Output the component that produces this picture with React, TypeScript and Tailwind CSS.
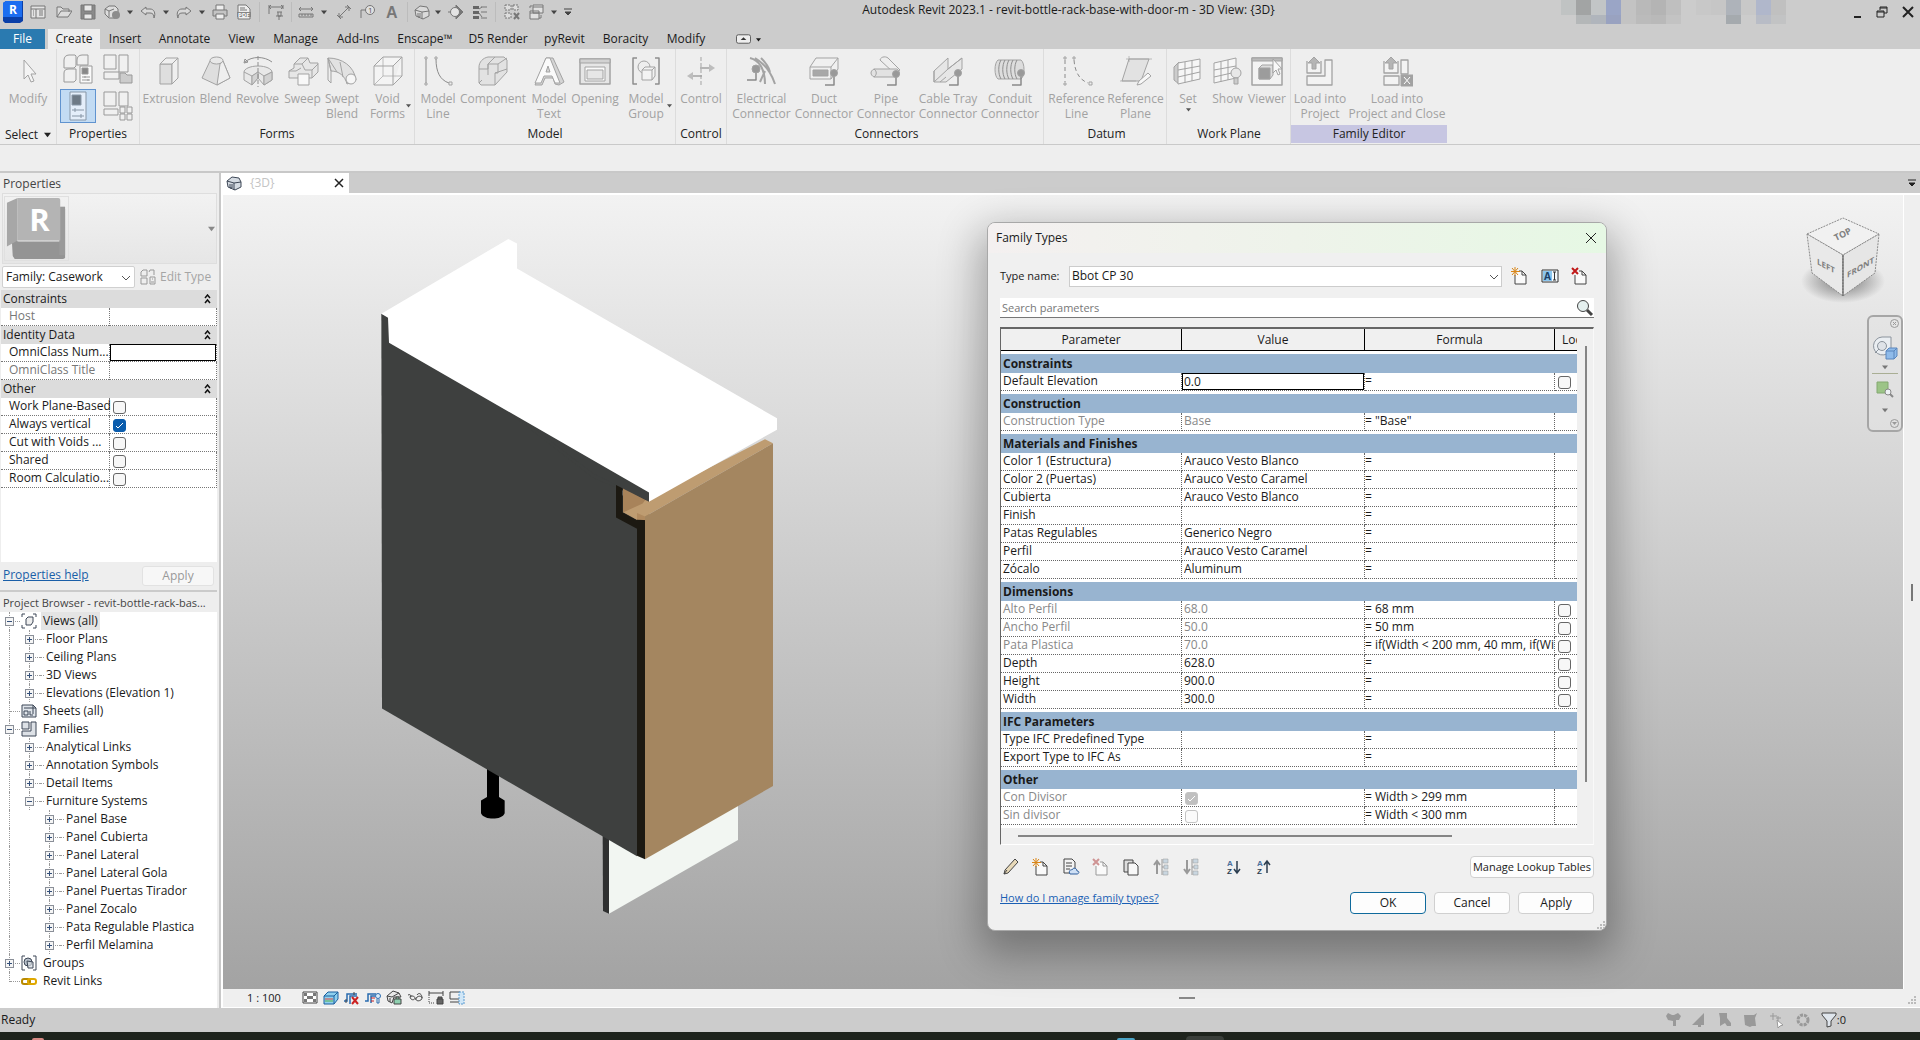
import React, { useState } from 'react';

type IconProps = { size?: number; className?: string };

type Param = {
  name: string;
  value?: string;
  formula: string;
  lock?: boolean;
  muted?: boolean;
  active?: boolean;
  check?: 'on' | 'off';
};

type TreeRow = {
  label: string;
  level: 0 | 1 | 2;
  toggle?: '+' | '-';
  icon?: string;
  selected?: boolean;
};

const paramGroups: { title: string; rows: Param[] }[] = [
  {
    title: 'Constraints',
    rows: [{ name: 'Default Elevation', value: '0.0', formula: '=', lock: true, active: true }],
  },
  {
    title: 'Construction',
    rows: [{ name: 'Construction Type', value: 'Base', formula: '= "Base"', muted: true }],
  },
  {
    title: 'Materials and Finishes',
    rows: [
      { name: 'Color 1 (Estructura)', value: 'Arauco Vesto Blanco', formula: '=' },
      { name: 'Color 2 (Puertas)', value: 'Arauco Vesto Caramel', formula: '=' },
      { name: 'Cubierta', value: 'Arauco Vesto Blanco', formula: '=' },
      { name: 'Finish', value: '', formula: '=' },
      { name: 'Patas Regulables', value: 'Generico Negro', formula: '=' },
      { name: 'Perfil', value: 'Arauco Vesto Caramel', formula: '=' },
      { name: 'Zócalo', value: 'Aluminum', formula: '=' },
    ],
  },
  {
    title: 'Dimensions',
    rows: [
      { name: 'Alto Perfil', value: '68.0', formula: '= 68 mm', lock: true, muted: true },
      { name: 'Ancho Perfil', value: '50.0', formula: '= 50 mm', lock: true, muted: true },
      { name: 'Pata Plastica', value: '70.0', formula: '= if(Width < 200 mm, 40 mm, if(Wi', lock: true, muted: true },
      { name: 'Depth', value: '628.0', formula: '=', lock: true },
      { name: 'Height', value: '900.0', formula: '=', lock: true },
      { name: 'Width', value: '300.0', formula: '=', lock: true },
    ],
  },
  {
    title: 'IFC Parameters',
    rows: [
      { name: 'Type IFC Predefined Type', formula: '=' },
      { name: 'Export Type to IFC As', formula: '=' },
    ],
  },
  {
    title: 'Other',
    rows: [
      { name: 'Con Divisor', formula: '= Width > 299 mm', muted: true, check: 'on' },
      { name: 'Sin divisor', formula: '= Width < 300 mm', muted: true, check: 'off' },
    ],
  },
];

const tree: TreeRow[] = [
  { label: 'Views (all)', level: 0, toggle: '-', icon: 'views', selected: true },
  { label: 'Floor Plans', level: 1, toggle: '+' },
  { label: 'Ceiling Plans', level: 1, toggle: '+' },
  { label: '3D Views', level: 1, toggle: '+' },
  { label: 'Elevations (Elevation 1)', level: 1, toggle: '+' },
  { label: 'Sheets (all)', level: 0, icon: 'sheets' },
  { label: 'Families', level: 0, toggle: '-', icon: 'families' },
  { label: 'Analytical Links', level: 1, toggle: '+' },
  { label: 'Annotation Symbols', level: 1, toggle: '+' },
  { label: 'Detail Items', level: 1, toggle: '+' },
  { label: 'Furniture Systems', level: 1, toggle: '-' },
  { label: 'Panel Base', level: 2, toggle: '+' },
  { label: 'Panel Cubierta', level: 2, toggle: '+' },
  { label: 'Panel Lateral', level: 2, toggle: '+' },
  { label: 'Panel Lateral Gola', level: 2, toggle: '+' },
  { label: 'Panel Puertas Tirador', level: 2, toggle: '+' },
  { label: 'Panel Zocalo', level: 2, toggle: '+' },
  { label: 'Pata Regulable Plastica', level: 2, toggle: '+' },
  { label: 'Perfil Melamina', level: 2, toggle: '+' },
  { label: 'Groups', level: 0, toggle: '+', icon: 'groups' },
  { label: 'Revit Links', level: 0, icon: 'links' },
];

const menuTabs = [
  { label: 'Create', width: 'w-[52px]' },
  { label: 'Insert', width: 'w-[50px]' },
  { label: 'Annotate', width: 'w-[69px]' },
  { label: 'View', width: 'w-[45px]' },
  { label: 'Manage', width: 'w-[63px]' },
  { label: 'Add-Ins', width: 'w-[62px]' },
  { label: 'Enscape™', width: 'w-[72px]' },
  { label: 'D5 Render', width: 'w-[74px]' },
  { label: 'pyRevit', width: 'w-[59px]' },
  { label: 'Boracity', width: 'w-[63px]' },
  { label: 'Modify', width: 'w-[58px]' },
];

const ribbonPanels = [
  {
    title: 'Forms',
    className: 'w-[275px]',
    tools: [
      { icon: 'extrusion', lines: ['Extrusion'], width: 'w-[58px]' },
      { icon: 'blend', lines: ['Blend'], width: 'w-[35px]' },
      { icon: 'revolve', lines: ['Revolve'], width: 'w-[49px]' },
      { icon: 'sweep', lines: ['Sweep'], width: 'w-[41px]' },
      { icon: 'swept', lines: ['Swept', 'Blend'], width: 'w-[38px]' },
      { icon: 'void', lines: ['Void', 'Forms'], width: 'w-[53px]', drop: true },
    ],
  },
  {
    title: 'Model',
    className: 'w-[261px]',
    tools: [
      { icon: 'line', lines: ['Model', 'Line'], width: 'w-[46px]' },
      { icon: 'component', lines: ['Component'], width: 'w-[64px]' },
      { icon: 'text', lines: ['Model', 'Text'], width: 'w-[48px]' },
      { icon: 'opening', lines: ['Opening'], width: 'w-[44px]' },
      { icon: 'group', lines: ['Model', 'Group'], width: 'w-[58px]', drop: true },
    ],
  },
  {
    title: 'Control',
    className: 'w-[51px]',
    tools: [{ icon: 'control', lines: ['Control'], width: 'w-[50px]' }],
  },
  {
    title: 'Connectors',
    className: 'w-[317px] pl-[3px]',
    tools: [
      { icon: 'electrical', lines: ['Electrical', 'Connector'], width: 'w-[63px]' },
      { icon: 'duct', lines: ['Duct', 'Connector'], width: 'w-[62px]' },
      { icon: 'pipe', lines: ['Pipe', 'Connector'], width: 'w-[62px]' },
      { icon: 'tray', lines: ['Cable Tray', 'Connector'], width: 'w-[62px]' },
      { icon: 'conduit', lines: ['Conduit', 'Connector'], width: 'w-[62px]' },
    ],
  },
  {
    title: 'Datum',
    className: 'w-[123px] pl-[3px]',
    tools: [
      { icon: 'refline', lines: ['Reference', 'Line'], width: 'w-[59px]' },
      { icon: 'refplane', lines: ['Reference', 'Plane'], width: 'w-[59px]' },
    ],
  },
  {
    title: 'Work Plane',
    className: 'w-[124px] pl-px',
    tools: [
      { icon: 'set', lines: ['Set'], width: 'w-[40px]', below: true },
      { icon: 'show', lines: ['Show'], width: 'w-[39px]' },
      { icon: 'viewer', lines: ['Viewer'], width: 'w-[40px]' },
    ],
  },
  {
    title: 'Family Editor',
    className: 'w-[156px]',
    highlight: true,
    tools: [
      { icon: 'load', lines: ['Load into', 'Project'], width: 'w-[58px]' },
      { icon: 'loadclose', lines: ['Load into', 'Project and Close'], width: 'w-[96px]' },
    ],
  },
];

// 32px ribbon drawings, all in the disabled grey
const ribbonIcons: Record<string, React.ReactNode> = {
  cursor: <path d="M12 5v19l4-4 3 7 3-1-3-7h5z" fill="#f4f4f4" />,
  extrusion: (
    <>
      <path d="M7 9h12v20H7z" fill="#dedede" />
      <path d="M7 9l6-6h12l-6 6zM19 9l6-6v20l-6 6z" fill="#efefef" />
    </>
  ),
  blend: (
    <>
      <path d="M10 6L2 23l15 7 13-7-7-17z" fill="#dedede" />
      <path d="M20 9l-3 21 13-7-7-17z" fill="#efefef" />
      <ellipse cx="16.500" cy="5.500" rx="6.500" ry="3.500" fill="#e8e8e8" />
    </>
  ),
  revolve: (
    <>
      <path d="M2 17c0-3 6-6 14-6s14 3 14 6v8l-8 5-6-7-6 7-8-5z" fill="#e8e8e8" />
      <path d="M2 17l8 4 6-4 6 4 8-4M10 21v9M22 21v9M16 17v6" fill="none" />
      <path d="M10 21l6-4v6l-6 7zM22 21v9l8-5v-8z" fill="#d2d2d2" />
      <path d="M3 7c7-6 19-6 27 0M2 8l1-4 3 3z" fill="none" stroke="#8e8e8e" />
      <path d="M16 1v31" strokeDasharray="4 2" stroke="#8e8e8e" />
    </>
  ),
  sweep: (
    <>
      <path d="M7 9l6-6h8l2 5h8v9l-6 6H2v-7l5-3z" fill="#e6e6e6" />
      <path d="M7 9h8l3 6h7l6-6M15 9l6-6M2 16h7l5-3M25 15v8" fill="none" />
      <path d="M11 19h11v11H11z" fill="#f8f8f8" />
    </>
  ),
  swept: (
    <>
      <path d="M2 3c14 0 26 8 28 22l-9 4C19 21 13 16 5 16z" fill="#e2e2e2" />
      <path d="M2 3v22l3 3V16zM2 3l9 14M14 7l3 15" fill="none" />
      <circle cx="25" cy="24" r="5" fill="#f6f6f6" />
    </>
  ),
  void: (
    <>
      <path d="M2 11h19v19H2zM2 11l9-9h19l-9 9M30 2v19l-9 9" fill="#f4f4f4" />
      <path d="M11 2v19L2 30M11 21h19" fill="none" strokeWidth="0.7" />
    </>
  ),
  line: (
    <>
      <path d="M4 4v24M14 4c0 13 4 21 13 24" fill="none" stroke="#8a8a8a" />
      <path d="M3 2h2v2H3zM3 28h2v2H3zM13 2h2v2h-2zM27 27h3v3h-3z" fill="#eee" />
    </>
  ),
  component: (
    <>
      <path d="M2 12c0-5 4-9 9-10h16l3 3v12L18 30H4l-2-2z" fill="#e2e2e2" />
      <path d="M2 14h9V9l7-7M11 9h10l9-6M11 20V9M18 30V18h3V9M18 18l12-4M2 28l3-3" fill="none" />
    </>
  ),
  text: (
    <>
      <path d="M13 3h7l11 24-5 3-4-1-2-6h-8l-3 7H2z" fill="#d4d4d4" />
      <path d="M13 3h4l10 25h-5l-3-7h-8l-3 7H2zM13 17h4l-2-6z" fill="#fafafa" />
    </>
  ),
  opening: (
    <>
      <path d="M1 4h30v25H1z" fill="#e6e6e6" strokeWidth="1.500" />
      <path d="M1 4h30v4H1z" fill="#d2d2d2" />
      <path d="M6 12h20v14H6z" fill="#fafafa" />
      <path d="M8 15h16v9H8z" fill="#e6e6e6" />
    </>
  ),
  group: (
    <>
      <path d="M7 3H3v26h4M25 3h4v26h-4" fill="none" stroke="#8e8e8e" strokeWidth="1.500" />
      <circle cx="14" cy="12" r="6" fill="#eee" />
      <path d="M12 15l3-3h10v9l-3 4H12z" fill="#f3f3f3" />
      <path d="M12 15h10v10M22 15l3-3" fill="none" />
    </>
  ),
  control: (
    <>
      <path d="M16 2v28" strokeDasharray="4 2" />
      <path d="M15 13h10M17 21H7" fill="none" strokeWidth="1.500" />
      <path d="M30 13l-6-4v8zM2 21l6-4v8z" fill="#bdbdbd" stroke="none" />
    </>
  ),
  electrical: (
    <>
      <path d="M4 3c9 2 15 11 15 26M9 3c10 6 16 14 20 26M15 3c5 5 8 10 9 14M19 16l-5 11" fill="none" strokeWidth="2" />
      <path d="M10 16v9H1" fill="none" stroke="#8a8a8a" strokeWidth="1.500" />
      <circle cx="10" cy="14" r="4" fill="#999" />
    </>
  ),
  duct: (
    <>
      <path d="M2 12l6-9h22v11l-7 10H2z" fill="#f0f0f0" />
      <path d="M2 12h21l7-9M23 12v12" fill="none" />
      <path d="M5 15h15v6H5z" fill="#a8a8a8" />
      <path d="M26 21v9h-9" fill="none" stroke="#8a8a8a" strokeWidth="1.500" />
      <circle cx="26" cy="18" r="3.500" fill="#999" />
    </>
  ),
  pipe: (
    <>
      <path d="M10 5c1-4 7-4 9-1l11 11-6 3z" fill="#eee" />
      <path d="M4 14h23c3 2 3 6 0 8H4c-4-2-4-6 0-8z" fill="#e2e2e2" />
      <path d="M4 14c3 2 3 6 0 8" fill="none" />
      <path d="M26 22v8h-9" fill="none" stroke="#8a8a8a" strokeWidth="1.500" />
      <circle cx="26" cy="19" r="3.500" fill="#999" />
    </>
  ),
  tray: (
    <>
      <path d="M2 16L16 3v11l14-11v11L14 27H2z" fill="#e6e6e6" />
      <path d="M2 16v11L16 14M8 27l6-5M16 14l14-11" fill="none" />
      <path d="M26 21v9h-9" fill="none" stroke="#8a8a8a" strokeWidth="1.500" />
      <circle cx="26" cy="18" r="3.500" fill="#999" />
    </>
  ),
  conduit: (
    <>
      <path d="M4 5h23c4 3 4 16 0 19H4C0 21 0 8 4 5z" fill="#ddd" />
      <path d="M7 5c-3 5-3 14 0 19M11 5c-3 5-3 14 0 19M15 5c-3 5-3 14 0 19M19 5c-3 5-3 14 0 19M23 5c-3 5-3 14 0 19" fill="none" stroke="#8e8e8e" />
      <path d="M27 21v9h-9" fill="none" stroke="#8a8a8a" strokeWidth="1.500" />
      <circle cx="27" cy="18" r="3.500" fill="#999" />
    </>
  ),
  refline: (
    <>
      <path d="M4 5v22M13 5c1 13 6 20 14 23" fill="none" stroke="#8a8a8a" strokeDasharray="4 3" />
      <path d="M3 2h2v2H3zM3 28h2v2H3zM12 2h2v2h-2zM28 27h3v3h-3z" fill="#eee" />
    </>
  ),
  refplane: (
    <>
      <path d="M9 4h20l-8 22H2z" fill="#e2e2e2" />
      <path d="M6 4h26M9 1v6M0 26h16" fill="none" strokeWidth="0.700" />
      <path d="M28 18l3 3-10 8-4 1 2-4z" fill="#f8f8f8" />
    </>
  ),
  set: (
    <>
      <path d="M2 12l5-5v22l-5-4z" fill="#ccc" />
      <path d="M6 8l22-4v20L6 29z" fill="#f6f6f6" />
      <path d="M13 7v21M20 5v21M6 15l22-4M6 22l22-5" fill="none" />
    </>
  ),
  show: (
    <>
      <path d="M2 8l22-5v20L2 28z" fill="#f6f6f6" />
      <path d="M9 7v20M16 5v20M2 15l22-4M2 22l22-5" fill="none" />
      <circle cx="24" cy="18" r="5" fill="#e8e8e8" />
      <path d="M22 23h4v6h-4z" fill="#ccc" />
    </>
  ),
  viewer: (
    <>
      <path d="M1 3h30v27H1z" fill="#f3f3f3" strokeWidth="1.500" />
      <path d="M1 3h30v3H1z" fill="#bbb" />
      <path d="M8 13l3-3h11v10l-3 4H8z" fill="#ddd" />
      <path d="M8 13h11v11H8z" fill="#9c9c9c" />
      <path d="M22 4v14l3-3 2 5 2-1-2-5h4z" fill="#f8f8f8" />
    </>
  ),
  load: (
    <>
      <path d="M3 6v12h14V6M21 5h7v25H3v-9h18z" fill="#f3f3f3" strokeWidth="1.300" />
      <path d="M10 2l6 6h-4v6H8V8H4z" fill="#b5b5b5" />
    </>
  ),
  loadclose: (
    <>
      <path d="M3 6v12h14V6M20 5h7v14h-7zM3 21h15v9H3z" fill="#f3f3f3" strokeWidth="1.300" />
      <path d="M10 2l6 6h-4v6H8V8H4z" fill="#b5b5b5" />
      <path d="M20 20h12v11H20z" fill="#a2a2a2" />
      <path d="M23 22l6 7M29 22l-6 7" stroke="#fff" />
    </>
  ),
};

const RibbonIcon: React.FC<{ name: string }> = ({ name }) => (
  <svg width="32" height="32" viewBox="0 0 32 32" stroke="#a3a3a3" strokeWidth="1" strokeLinejoin="round">
    {ribbonIcons[name]}
  </svg>
);

const Caret: React.FC<IconProps> = ({ size = 7, className }) => (
  <svg width={size} height={size} viewBox="0 0 8 8" className={className}>
    <path d="M0 2h8L4 7z" fill="currentColor" />
  </svg>
);

const Chevron: React.FC<IconProps> = ({ className }) => (
  <svg width="10" height="10" viewBox="0 0 10 10" className={className} fill="none" stroke="#555">
    <path d="M1 3l4 4 4-4" />
  </svg>
);

// quick access toolbar: glyph plus the room it takes
const quickTools: { name: string; box: string; drawing: React.ReactNode }[] = [
  {
    name: 'Home',
    box: 'w-7',
    drawing: (
      <>
        <path d="M1 2h14v12H1z" fill="#e4e4e4" />
        <path d="M1 5h14M6 5v9M3 7h1M3 9h1M3 11h1M9 7h4M9 9h4M9 11h4" />
      </>
    ),
  },
  { name: 'Open', box: 'w-6', drawing: <path d="M1 13V3h4l2 2h6v3M1 13l4-6h11l-4 6z" fill="#dcdcdc" /> },
  {
    name: 'Save',
    box: 'w-6',
    drawing: (
      <>
        <path d="M1 1h14v14H1z" fill="#8a8a8a" />
        <path d="M4 1h8v6H4zM4 10h8v5H4z" fill="#e8e8e8" />
      </>
    ),
  },
  {
    name: 'Sync',
    box: 'w-6',
    drawing: (
      <>
        <path d="M1 5l4-3h6l3 3v5l-3 4H5l-4-4z" fill="#ddd" />
        <path d="M1 5l4 2 5-2M5 7v6" fill="none" />
        <circle cx="12" cy="11" r="4" fill="#8c8c8c" stroke="none" />
      </>
    ),
  },
  { name: 'caret', box: 'w-3', drawing: null },
  { name: 'Undo', box: 'w-6', drawing: <path d="M6 3L1 7l5 4V9h4c3 0 4 2 4 5 2-5 0-9-4-9H6z" fill="#d8d8d8" /> },
  { name: 'caret', box: 'w-3', drawing: null },
  { name: 'Redo', box: 'w-6', drawing: <path d="M10 3l5 4-5 4V9H6c-3 0-4 2-4 5-2-5 0-9 4-9h4z" fill="#d8d8d8" /> },
  { name: 'caret', box: 'w-3', drawing: null },
  {
    name: 'Print',
    box: 'w-6',
    drawing: (
      <>
        <path d="M4 1h8v6H4z" fill="#eee" />
        <path d="M1 6h14v6H1z" fill="#c4c4c4" />
        <path d="M4 10h8v5H4z" fill="#eee" />
      </>
    ),
  },
  {
    name: 'Export PDF',
    box: 'w-6',
    drawing: (
      <>
        <path d="M2 1h8l4 4v10H2z" fill="#eee" />
        <path d="M4 4h5M4 6h7" />
        <path d="M1 8h14v5H1z" fill="#858585" stroke="none" />
        <text x="2" y="13" fontSize="6" fontWeight="700" fill="#fff" stroke="none">PDF</text>
      </>
    ),
  },
  { name: 'sep', box: 'w-2', drawing: null },
  { name: 'Measure', box: 'w-6', drawing: <path d="M1 1v9M15 1v4M1 3h14M3 1L1 3l2 2M13 1l2 2-2 2M9 8h5M10 8v4h3V8M8 12h7M11 12v4" fill="none" /> },
  { name: 'sep', box: 'w-2', drawing: null },
  { name: 'Dimension', box: 'w-5', drawing: <path d="M1 5h14M3 3L1 5l2 2M13 3l2 2-2 2M1 10h14v3H1zM4 10v2M7 10v2M10 10v2M13 10v2" fill="none" /> },
  { name: 'caret', box: 'w-4', drawing: null },
  { name: 'Aligned Dimension', box: 'w-6', drawing: <path d="M3 13L13 3M3 9v4h4M9 3h4v4M1 11l4 4M11 1l4 4" fill="none" /> },
  {
    name: 'Tag',
    box: 'w-6',
    drawing: (
      <>
        <path d="M1 14V6h5" fill="none" />
        <circle cx="10" cy="6" r="4.500" fill="#e0e0e0" />
        <text x="8" y="9" fontSize="8" fill="#555" stroke="none">1</text>
      </>
    ),
  },
  {
    name: 'Text',
    box: 'w-6',
    drawing: <text x="2" y="14" fontFamily="Liberation Sans" fontSize="16" fontWeight="700" fill="#777" stroke="none">A</text>,
  },
  { name: 'sep', box: 'w-2', drawing: null },
  {
    name: 'Default 3D View',
    box: 'w-5',
    drawing: (
      <>
        <path d="M1 6l5-4 7 1 2 4v5l-6 3-7-3z" fill="#dadada" />
        <path d="M1 6l7 2 7-1M8 8v7M4 9v4h2V9" fill="none" />
      </>
    ),
  },
  { name: 'caret', box: 'w-3', drawing: null },
  {
    name: 'Section',
    box: 'w-6',
    drawing: (
      <>
        <path d="M8 1l7 7-7 7z" fill="#777" />
        <circle cx="7" cy="8" r="4.500" fill="#e4e4e4" />
        <path d="M0 8h2" />
      </>
    ),
  },
  {
    name: 'Thin Lines',
    box: 'w-6',
    drawing: (
      <>
        <path d="M1 2h6v3H1zM1 7h6v3H1zM1 12h6v3H1z" fill="#666" stroke="none" />
        <path d="M9 3h6M9 8h6M9 14h6M7 5l3-2M7 9l3 4" fill="none" />
      </>
    ),
  },
  { name: 'sep', box: 'w-2', drawing: null },
  {
    name: 'Close Inactive',
    box: 'w-6',
    drawing: (
      <>
        <path d="M1 1h6v5H1zM9 1h5v5H9zM1 9h6v5H1z" fill="#ddd" strokeDasharray="2 1" />
        <path d="M10 9l5 6M15 9l-5 6" strokeWidth="2" />
      </>
    ),
  },
  { name: 'Switch Windows', box: 'w-6', drawing: <path d="M5 1h10v8H5zM5 3h10M2 7h9v8H2zM2 9h9M13 11v3h-2M2 4V2h2" fill="#e0e0e0" /> },
  { name: 'caret', box: 'w-3', drawing: null },
];

const treeIcons: Record<string, React.ReactNode> = {
  views: (
    <>
      <path d="M4 1H1v3M12 1h3v3M4 15H1v-3M12 15h3v-3" fill="none" />
      <path d="M5 6l2-2h5v5l-2 3H5z" fill="#eee" />
    </>
  ),
  sheets: (
    <>
      <path d="M1 2h11l3 3v9H1z" fill="#dfe4ea" />
      <path d="M3 5h9v6M3 8h4v4H3zM12 2v3h3M9 8v4h3" fill="none" />
    </>
  ),
  families: <path d="M1 1h7v7H1zM10 1h5v14H1v-5h9z" fill="#dde1e6" />,
  groups: (
    <>
      <path d="M4 1H1v14h3M12 1h3v14h-3" fill="none" />
      <circle cx="7" cy="7" r="4" fill="#b9c2cc" />
      <path d="M6 6l6 1v6H7z" fill="#d7dde3" fillOpacity="0.700" />
    </>
  ),
  links: (
    <>
      <rect x="1" y="6" width="8" height="5" rx="2" fill="none" stroke="#b98a00" strokeWidth="2" />
      <rect x="7" y="6" width="8" height="5" rx="2" fill="none" stroke="#e0a800" strokeWidth="2" />
    </>
  ),
};

const viewTools: { name: string; drawing: React.ReactNode }[] = [
  {
    name: 'Detail Level',
    drawing: (
      <>
        <path d="M1 2h14v11H1z" fill="#fff" />
        <path d="M2 3h3v3H2zM11 3h3v3h-3zM5 6h6v3H5zM2 9h3v3H2zM11 9h3v3h-3z" fill="#777" stroke="none" />
      </>
    ),
  },
  {
    name: 'Visual Style',
    drawing: (
      <>
        <path d="M1 6l4-4h10v7l-4 5H1z" fill="#8fd0ee" stroke="#1a5f9e" />
        <path d="M1 6h10v8M11 6l4-4" fill="none" stroke="#1a5f9e" />
        <path d="M2 9h8" stroke="#e04b3a" />
        <path d="M2 11h8" stroke="#5ab04a" />
      </>
    ),
  },
  {
    name: 'Crop View',
    drawing: (
      <>
        <path d="M0 11h3V4h10M6 14V6h7" fill="none" stroke="#2a6cb0" strokeWidth="1.500" />
        <path d="M10 2v3M2 13V9" stroke="#444" />
        <path d="M8 7l6 7M14 7l-6 7" stroke="#cc2222" strokeWidth="2" />
      </>
    ),
  },
  {
    name: 'Show Crop Region',
    drawing: (
      <>
        <path d="M0 11h3V4h8M6 13V6h4" fill="none" stroke="#2a6cb0" strokeWidth="1.500" />
        <path d="M6 8h4M6 11h3" stroke="#cc2222" />
        <circle cx="13" cy="6" r="2.500" fill="#d9ecfa" stroke="#2a6cb0" />
        <path d="M12 9v4h2V9" fill="none" stroke="#2a6cb0" />
      </>
    ),
  },
  {
    name: 'Locked View',
    drawing: (
      <>
        <path d="M1 6l6-5 6 2 2 4H8l-2 6-4-2z" fill="#e8e8e8" />
        <path d="M1 6l5 1 7-4M4 8v4" fill="none" />
        <path d="M8 9h7v5H8zM10 9V7h3v2" fill="#8fd0b0" />
      </>
    ),
  },
  { name: 'Temporary Hide', drawing: <path d="M1 5c2-1 3 0 3 2M3 7c0-2 5-1 5 1s-4 3-5-1zM9 9c0-3 6-4 6-1s-6 4-6 1zM8 9h1M10 5c2-3 5-1 5 3" fill="none" /> },
  {
    name: 'Reveal Constraints',
    drawing: (
      <>
        <path d="M1 1v5M15 1v5M1 3h14" fill="none" />
        <path d="M1 7v6h6" fill="none" strokeDasharray="1 1" />
        <path d="M9 9h6v5H9zM10 9V7h4v2" fill="#666" />
      </>
    ),
  },
  {
    name: 'Worksharing Display',
    drawing: (
      <>
        <path d="M1 2h10v7H1zM1 12h10" fill="none" />
        <path d="M10 2h5v12h-5z" fill="#cfe6f7" stroke="#5b9bd0" strokeDasharray="2 1" />
      </>
    ),
  },
];

const statusTools: { name: string; drawing: React.ReactNode }[] = [
  { name: 'Select Links', drawing: <path d="M3 1l4 2h2l4-2 3 3-2 4h-3v6H8V9L3 8 1 4z" /> },
  { name: 'Select Underlay', drawing: <path d="M1 13L13 1v12h-3v2H7v-2z" /> },
  { name: 'Select Pinned', drawing: <path d="M2 1h8v5l4 5v3h-4l-2-3-5 3V6z" /> },
  { name: 'Select by Face', drawing: <path d="M1 3h10l3-2-2 5 1 8H9l-2 1-5-2z" /> },
  {
    name: 'Drag on Selection',
    drawing: (
      <>
        <path d="M4 1v7M1 4h7M7 6h5M9 4v5" stroke="#999" />
        <path d="M8 8l6 5-3 1-2 2z" fill="#fff" stroke="#999" />
      </>
    ),
  },
  { name: 'Background Processes', drawing: <circle cx="8" cy="8" r="5" fill="none" stroke="#999" strokeWidth="3" strokeDasharray="3 1" /> },
];

const NewIcon: React.FC<{ mark: 'new' | 'delete'; dim?: boolean }> = ({ mark, dim }) => (
  <svg width="18" height="18" viewBox="0 0 18 18" fill="none" stroke={dim ? '#999' : '#444'}>
    <path d="M4 8v9h11V8l-4-4H8" fill="#fafafa" />
    <path d="M11 4v4h4" />
    {mark === 'new' ? (
      <path d="M4 0v9M0 4.500h9M1 1l6 7M7 1L1 8" stroke="#d98516" />
    ) : (
      <path d="M1 1l6 6M7 1L1 7" stroke={dim ? '#cf9494' : '#c01818'} strokeWidth="2" />
    )}
  </svg>
);

const SortIcon: React.FC<{ up?: boolean }> = ({ up }) => (
  <svg width="18" height="18" viewBox="0 0 18 18">
    <g fontFamily="Liberation Sans" fontSize="8" fontWeight="700">
      <text x="3" y="8" fill="#4a6f9c">A</text>
      <text x="3" y="16" fill="#2c3e50">Z</text>
    </g>
    <path d={up ? 'M13 15V4M10 7l3-4 3 4' : 'M13 3v11M10 11l3 4 3-4'} fill="none" stroke="#2c3e50" strokeWidth="1.500" />
  </svg>
);

const MoveIcon: React.FC<{ up?: boolean }> = ({ up }) => (
  <svg width="18" height="18" viewBox="0 0 18 18" stroke="#999">
    <path d={up ? 'M5 16V4M2 7l3-4 3 4' : 'M5 2v12M2 11l3 4 3-4'} fill="none" strokeWidth="2" />
    <path d="M10 1v16M10 9h3" />
    <path d="M11 1h5v4h-5zM12 7h4v4h-4zM11 13h5v4h-5z" fill="#c9d6e0" strokeWidth="0.500" />
  </svg>
);

const Checkbox: React.FC<{ label: string; defaultChecked?: boolean; disabled?: boolean }> = ({ label, defaultChecked, disabled }) => (
  <span className="relative block h-[13px] w-[13px]">
    <input
      type="checkbox"
      aria-label={label}
      defaultChecked={defaultChecked}
      disabled={disabled}
      className="peer block h-[13px] w-[13px] appearance-none rounded-[3px] border border-[#666] bg-[#f7f7f7] checked:border-[#0a5cad] checked:bg-[#0a5cad] disabled:border-[#c4c4c4] disabled:bg-[#fbfbfb] disabled:checked:bg-[#c0c0c0]"
    />
    <svg viewBox="0 0 13 13" className="pointer-events-none absolute inset-0 hidden peer-checked:block" fill="none" stroke="#fff">
      <path d="M3 7l2 2 5-5" />
    </svg>
  </span>
);

const TitleBar: React.FC = () => (
  <header className="flex h-[29px] shrink-0 items-start">
    <svg width="20" height="23" viewBox="0 0 20 23" className="ml-[3px] shrink-0">
      <path d="M0 3l3-2h17v20l-3 2H2l-2-2z" fill="#0a3fa8" />
      <path d="M0 3l3-2h16v16H0z" fill="#1b6df0" />
      <text x="6" y="14" fontSize="12" fontWeight="700" fill="#fff">R</text>
    </svg>
    <div className="flex h-6 shrink-0 items-center pl-px text-[#444]">
      {quickTools.map((tool, i) => {
        if (tool.name === 'sep') return <span key={i} className="mr-1 ml-[3px] h-5 w-px bg-[#bcbcbc]" />;
        return (
          <button key={i} aria-label={tool.name} className={`${tool.box} flex justify-center`}>
            {tool.name === 'caret' ? (
              <Caret size={6} />
            ) : (
              <svg width="16" height="16" viewBox="0 0 16 16" stroke="#777" fill="none">{tool.drawing}</svg>
            )}
          </button>
        );
      })}
      <svg width="8" height="8" viewBox="0 0 8 8" className="ml-1" stroke="#444">
        <path d="M0 1h8" />
        <path d="M1 4h6L4 7z" fill="#444" />
      </svg>
    </div>
    <h1 className="flex-1 pl-1 text-center leading-5 whitespace-nowrap">
      Autodesk Revit 2023.1 - revit-bottle-rack-base-with-door-m - 3D View: {'{3D}'}
    </h1>
    <div className="grid grid-cols-[repeat(15,15px)] grid-rows-[15px_9px]">
      <i className="bg-[#c0c3c3]" /><i className="bg-[#a2a4a4]" /><i className="bg-[#c2c5c6]" /><i className="bg-[#9aa5c6]" />
      <i className="bg-[#c3c3c3]" /><i className="bg-[#b9b9b9]" /><i className="bg-[#b4b4b4]" /><i className="bg-[#bfbfbf]" />
      <i /><i className="bg-[#c8c8c8]" /><i className="bg-[#c6c6c6]" /><i className="bg-[#aeb3ba]" />
      <i className="bg-[#c8c8c8]" /><i className="bg-[#b0b7cb]" /><i className="bg-[#c0c0c0]" />
      <i /><i className="bg-[#b4b7b8]" /><i className="bg-[#b0b5bc]" /><i className="bg-[#99a2c0]" />
      <i className="bg-[#c3c3c3]" /><i className="bg-[#bbb]" /><i className="bg-[#b9b9b9]" /><i className="bg-[#c3c3c3]" />
      <i /><i /><i /><i className="bg-[#a5aaae]" /><i /><i className="bg-[#b8bcc6]" /><i className="bg-[#c2c3c4]" />
    </div>
    <div className="flex h-6 items-center gap-[14px] pr-[6px] pl-[66px] text-[#222]">
      <button aria-label="Minimize">
        <svg width="10" height="12" viewBox="0 0 10 12"><path d="M2 11h7" stroke="currentColor" strokeWidth="2" /></svg>
      </button>
      <button aria-label="Restore">
        <svg width="12" height="12" viewBox="0 0 12 12" fill="none" stroke="currentColor">
          <path d="M4 4V1h7v6H8M1 5h7v6H1zM1 6h7M4 2h7" />
        </svg>
      </button>
      <button aria-label="Close">
        <svg width="12" height="12" viewBox="0 0 12 12"><path d="M1 1l10 10M11 1L1 11" stroke="currentColor" strokeWidth="2" /></svg>
      </button>
    </div>
  </header>
);

const MenuBar: React.FC = () => {
  const [active, setActive] = useState('Create');
  return (
    <nav className="flex h-5 shrink-0">
      <button className="mr-[3px] w-[45px] bg-[#2a7ab0] text-white">File</button>
      {menuTabs.map(tab => (
        <button
          key={tab.label}
          onClick={() => setActive(tab.label)}
          className={`${tab.width} whitespace-nowrap ${active === tab.label ? 'bg-[#eee]' : ''}`}
        >
          {tab.label}
        </button>
      ))}
      <button aria-label="Ribbon state" className="ml-[21px] flex items-center gap-[5px]">
        <svg width="15" height="10" viewBox="0 0 16 10">
          <rect x="0.500" y="0.500" width="15" height="9" rx="2" fill="#eee" stroke="#555" />
          <path d="M5 6h6L8 3z" fill="#333" />
        </svg>
        <Caret size={5} />
      </button>
    </nav>
  );
};

const Ribbon: React.FC = () => (
  <div className="flex h-24 shrink-0 border-b border-[#c9c9c9] bg-[#eee] leading-[15px] text-[#a2a2a2]">
    <div className="flex w-[57px] flex-col border-r border-[#dcdcdc]">
      <button className="flex h-[76px] flex-col items-center pt-[6px]">
        <RibbonIcon name="cursor" />
        <span className="mt-1">Modify</span>
      </button>
      <button className="flex h-[18px] items-center justify-center gap-[6px] text-[#222]">
        Select <Caret size={7} />
      </button>
    </div>
    <div className="flex w-[83px] flex-col border-r border-[#dcdcdc]">
      <div className="grid h-[76px] grid-cols-2 gap-x-1 px-[3px] pt-1">
        <button aria-label="Family Category" className="flex h-8 items-center justify-center">
          <svg width="30" height="30" viewBox="0 0 30 30" stroke="#999" fill="#f0f0f0">
            <path d="M1 6c0-3 2-5 5-5h6l1 1v10l-2 2H1zM14 6c0-3 2-5 5-5h6v10H14zM1 19c0-3 2-4 5-4h7v11l-2 2H1z" />
            <path d="M17 12h12v17H17z" fill="#fafafa" />
            <path d="M19 14h6v6h-6z" fill="#888" />
            <path d="M19 23h8M19 26h8M22 22v2M25 25v2" />
          </svg>
        </button>
        <button aria-label="Family Types" className="flex h-8 items-center justify-center">
          <svg width="30" height="30" viewBox="0 0 30 30" stroke="#999" fill="#f0f0f0">
            <path d="M1 1h12v14H1zM16 1h9v17h-9v7H1v-7h15z" />
            <path d="M17 19h5l2 2h5v8H17z" fill="#ccc" />
          </svg>
        </button>
        <button aria-label="Properties" className="mt-px flex h-[34px] items-center justify-center border border-[#6093cf] bg-[#c2dbf3]">
          <svg width="22" height="30" viewBox="0 0 22 30" stroke="#8796a6" fill="#e4eefa">
            <path d="M3 1h16v28H3z" />
            <path d="M5 4h9v10H5z" fill="#6e7a86" />
            <path d="M5 19h12M5 25h12M8 17v4M14 23v4" />
          </svg>
        </button>
        <button aria-label="Family Types Manager" className="mt-px flex h-[34px] items-center justify-center">
          <svg width="30" height="30" viewBox="0 0 30 30" stroke="#999" fill="#f0f0f0">
            <path d="M1 1h12v14H1zM16 1h9v14h-9zM1 18h14v6H1z" />
            <path d="M17 16h5v6h-5zM24 16h5v6h-5zM17 23h5v6h-5zM24 23h5v6h-5z" />
          </svg>
        </button>
      </div>
      <div className="text-center leading-[18px] text-[#222]">Properties</div>
    </div>
    {ribbonPanels.map(panel => (
      <div
        key={panel.title}
        className={`${panel.className} flex flex-col ${panel.highlight ? '' : 'border-r border-[#dcdcdc]'}`}
      >
        <div className="flex h-[76px]">
          {panel.tools.map(tool => (
            <button key={tool.icon} className={`${tool.width} relative flex shrink-0 flex-col items-center pt-[6px]`}>
              <RibbonIcon name={tool.icon} />
              <span className="mt-1 whitespace-nowrap">
                {tool.lines.map(line => (
                  <span key={line} className="block">{line}</span>
                ))}
              </span>
              {'below' in tool && <Caret size={5} className="mt-px text-[#555]" />}
              {'drop' in tool && <Caret size={5} className="absolute right-[3px] bottom-[17px] text-[#555]" />}
            </button>
          ))}
        </div>
        <div className={`text-center leading-[18px] whitespace-nowrap text-[#222] ${panel.highlight ? 'bg-[#c7c6e2]' : ''}`}>
          {panel.title}
        </div>
      </div>
    ))}
  </div>
);

const SectionHead: React.FC<{ title: string }> = ({ title }) => (
  <tr className="h-[18px] bg-[#dcdcdc]">
    <th colSpan={2} className="p-0 text-left font-normal">
      <div className="flex items-center justify-between pr-[6px] pl-[2px] leading-[18px]">
        {title}
        <svg width="7" height="10" viewBox="0 0 7 10" fill="none" stroke="#111" strokeWidth="1.500">
          <path d="M1 4l2.500-3L6 4M1 9l2.500-3L6 9" />
        </svg>
      </div>
    </th>
  </tr>
);

const PropRow: React.FC<{ name: string; muted?: boolean; children?: React.ReactNode }> = ({ name, muted, children }) => (
  <tr className="h-[18px]">
    <td className={`border-b border-dotted border-[#777] p-0 pl-2 align-top leading-[15px] whitespace-nowrap ${muted ? 'text-[#777]' : ''}`}>{name}</td>
    <td className="border-x border-b border-dotted border-[#777] p-0">{children}</td>
  </tr>
);

const PropertiesPanel: React.FC = () => (
  <section className="flex h-[417px] shrink-0 flex-col">
    <h2 className="h-5 pl-[3px] leading-[22px] text-[#444]">Properties</h2>
    <div className="ml-[2px] flex h-[71px] items-center justify-between border border-[#dedede] bg-linear-to-b from-[#f2f2f2] to-[#e6e6e6] pr-px pl-px">
      <svg width="65" height="65" viewBox="0 0 65 65" className="border border-[#e0e0e0]">
        <path d="M7 44l7 2h46V12h2v51l-2 1H10l-2-3z" fill="#949494" />
        <path d="M56 10h6v50h-6z" fill="#9a9a9a" />
        <path d="M2 6l11-5v44L2 51z" fill="#a7a7a7" />
        <path d="M13 1h41c3 0 3 1 3 4v40H13z" fill="#b4b4b4" />
        <text x="25" y="35" fontSize="32" fontWeight="700" fill="#fff">R</text>
      </svg>
      <Caret size={7} className="text-[#888]" />
    </div>
    <div className="flex h-[26px] items-center pl-[2px]">
      <div className="relative w-[133px]">
        <select aria-label="Type filter" className="h-[22px] w-full appearance-none rounded-[2px] border border-[#d0d0d0] bg-white pl-[3px]">
          <option>Family: Casework</option>
        </select>
        <Chevron className="pointer-events-none absolute top-[7px] right-1" />
      </div>
      <button disabled className="flex h-5 items-center gap-1 pl-[5px] whitespace-nowrap text-[#a5a5a5]">
        <svg width="16" height="16" viewBox="0 0 16 16" fill="none" stroke="#999">
          <path d="M1 3l2-2h4v6H1zM9 3l1-2h4v5M1 9h6v6H1zM10 8h5v7h-5zM12 10h1M11 13h3" />
        </svg>
        Edit Type
      </button>
    </div>
    <div className="ml-px flex-1 bg-white">
      <table className="w-full table-fixed border-separate border-spacing-0">
        <colgroup>
          <col className="w-[108px]" />
          <col />
        </colgroup>
        <tbody>
          <SectionHead title="Constraints" />
          <PropRow name="Host" muted />
          <SectionHead title="Identity Data" />
          <PropRow name="OmniClass Num...">
            <input aria-label="OmniClass Number" className="block h-[17px] w-full border border-black bg-white" />
          </PropRow>
          <PropRow name="OmniClass Title" muted />
          <SectionHead title="Other" />
          {['Work Plane-Based', 'Always vertical', 'Cut with Voids ...', 'Shared', 'Room Calculatio...'].map(name => (
            <PropRow key={name} name={name}>
              <div className="pt-[2px] pl-[3px]">
                <Checkbox label={name} defaultChecked={name === 'Always vertical'} />
              </div>
            </PropRow>
          ))}
        </tbody>
      </table>
    </div>
    <div className="flex h-7 items-start justify-between pt-1 pr-[3px] pl-[3px]">
      <a href="#properties-help" className="leading-[18px] text-[#1a5fa8] underline">Properties help</a>
      <button disabled className="h-5 w-[72px] rounded-[3px] border border-[#e2e2e2] bg-[#f7f7f7] text-[#999]">Apply</button>
    </div>
  </section>
);

const TreeToggle: React.FC<{ kind?: '+' | '-'; last?: boolean }> = ({ kind, last }) => (
  <span className="relative h-[18px] w-5 shrink-0">
    <span className={`absolute top-0 left-[9px] border-l border-dotted border-[#999] ${last ? 'h-[10px]' : 'h-full'}`} />
    <span className="absolute top-[9px] right-0 left-[10px] border-t border-dotted border-[#999]" />
    {kind && (
      <svg width="9" height="9" viewBox="0 0 9 9" className="absolute top-[5px] left-[5px]">
        <rect x="0.500" y="0.500" width="8" height="8" fill="#f5f5f5" stroke="#8a8f98" />
        <path d={kind === '+' ? 'M2 4.500h5M4.500 2v5' : 'M2 4.500h5'} stroke="#34507a" />
      </svg>
    )}
  </span>
);

const ProjectBrowser: React.FC = () => (
  <section className="flex min-h-0 flex-1 flex-col border-t-2 border-[#cbcbcb]">
    <h2 className="h-5 shrink-0 pl-[3px] text-[11px] leading-[22px] whitespace-nowrap text-[#444]">Project Browser - revit-bottle-rack-bas...</h2>
    <ul className="min-h-0 flex-1 overflow-hidden bg-white">
      {tree.map((row, i) => (
        <li key={row.label} className="flex h-[18px] items-center whitespace-nowrap">
          {row.level > 0 && <span className="ml-[9px] h-full w-[11px] shrink-0 border-l border-dotted border-[#999]" />}
          {row.level > 1 && <span className="h-full w-5 shrink-0" />}
          <TreeToggle kind={row.toggle} last={i === tree.length - 1} />
          {row.icon ? (
            <svg width="16" height="16" viewBox="0 0 16 16" stroke="#3d4756" className="mr-1 ml-px shrink-0">{treeIcons[row.icon]}</svg>
          ) : (
            <span className="w-1 shrink-0 border-t border-dotted border-[#999]" />
          )}
          <span className={`px-[2px] leading-[18px] ${row.selected ? 'bg-[#e4e4e4]' : ''}`}>{row.label}</span>
        </li>
      ))}
    </ul>
  </section>
);

const CabinetModel: React.FC = () => (
  <svg width="440" height="710" viewBox="0 0 1320 1568" preserveAspectRatio="none">
    <path d="M381 1200h36v74l17 8v28c-8 16-62 16-71 0v-28l18-8z" fill="#000" />
    <path d="M747 1360l387-70v79L747 1532z" fill="#f2f6f2" />
    <path d="M728 1350l19 10v172l-18-6z" fill="#2f3030" />
    <path d="M64 207l500 150 267 300v748L66 1079z" fill="#3e403f" />
    <path d="M64 207l803 370v45L700 570z" fill="#3e403f" />
    <path d="M768 583l20 8v55l43 17v-15l24 8v756l-24-8V682l-63-25z" fill="#1c1912" />
    <path d="M789 591l78 32v40l-36-1-42-17z" fill="#b08a5f" />
    <path d="M789 645l78-30 348-131 24 9-384 162-24-8v15z" fill="#be9c71" />
    <path d="M789 591l67 27-8 8-59 20z" fill="#a8835a" />
    <path d="M855 655l384-162v757L855 1412z" fill="#a48660" />
    <path d="M84 216l783 386v20L700 560z" fill="#3e403f" />
    <path d="M64 207L445 42l26 10v55l780 331v25L867 622v-20L87 271l-3-55z" fill="#fff" />
  </svg>
);

const ViewCube: React.FC = () => (
  <svg width="90" height="96" viewBox="0 0 90 96" className="absolute top-[18px] right-[15px]" stroke="#8a8a8a" strokeDasharray="2 1">
    <defs>
      <radialGradient id="cubeShadow">
        <stop offset="0" stopColor="#777" />
        <stop offset="1" stopColor="#777" stopOpacity="0" />
      </radialGradient>
    </defs>
    <ellipse cx="45" cy="68" rx="42" ry="22" fill="url(#cubeShadow)" stroke="none" />
    <path d="M9 21L45 5l36 16-36 21z" fill="#f1f1f1" />
    <path d="M9 21l36 21v41L14 60z" fill="#e9e9e9" />
    <path d="M81 21L45 42v41l32-23z" fill="#e6e6e6" />
    <path d="M45 42v41" stroke="#555" strokeDasharray="none" />
    <g fill="#808080" stroke="none" fontWeight="700">
      <text transform="translate(38 28) rotate(-26)" fontSize="9">TOP</text>
      <text transform="translate(19 51) skewY(28)" fontSize="8">LEFT</text>
      <text transform="translate(49 65) skewY(-30)" fontSize="8">FRONT</text>
    </g>
  </svg>
);

const NavigationBar: React.FC = () => (
  <div className="absolute top-[120px] right-0 flex h-[117px] w-9 flex-col items-center rounded-[6px] border-2 border-[#a6a6a6] bg-[#e2e2e2]/60 text-[#777]">
    <button aria-label="Close navigation bar" className="mt-[2px] mr-[2px] self-end">
      <svg width="9" height="9" viewBox="0 0 9 9" fill="none" stroke="#999">
        <circle cx="4.500" cy="4.500" r="4" />
        <path d="M3 3l3 3M6 3L3 6" />
      </svg>
    </button>
    <button aria-label="Steering wheel" className="mt-2">
      <svg width="26" height="26" viewBox="0 0 26 26" fill="none" stroke="#8b939c">
        <path d="M10 1h9v12a9 9 0 1 1-9-12z" fill="#eaeef2" />
        <circle cx="10" cy="10" r="4.500" fill="#dfe3e8" />
        <path d="M7 13l-4 4" />
        <path d="M14 15l3-3h8v8l-3 3h-8z" fill="#8fbbea" stroke="#5a86bd" />
        <path d="M14 15h8v8M22 15l3-3" stroke="#5a86bd" />
      </svg>
    </button>
    <Caret size={6} className="mt-[2px]" />
    <hr className="mt-[3px] w-[26px] border-[#a9ae94]" />
    <button aria-label="Zoom in region" className="mt-[7px]">
      <svg width="18" height="18" viewBox="0 0 18 18" stroke="#888">
        <path d="M1 1h11v11H1z" fill="#9cc487" stroke="#83a870" />
        <circle cx="12" cy="11" r="3" fill="#eef2f5" />
        <path d="M14 13l3 3" strokeWidth="2" />
      </svg>
    </button>
    <Caret size={6} className="mt-2" />
    <button aria-label="Options" className="mt-auto mr-[2px] mb-[2px] self-end">
      <svg width="9" height="9" viewBox="0 0 9 9" fill="none" stroke="#999">
        <circle cx="4.500" cy="4.500" r="4" />
        <path d="M2 3h5L4.500 6z" fill="#999" stroke="none" />
      </svg>
    </button>
  </div>
);

const ParamRow: React.FC<{ row: Param }> = ({ row }) => (
  <tr className="h-[18px] leading-[15px]">
    <td className={`border-r border-b border-dotted border-[#666] p-0 pl-[2px] align-top whitespace-nowrap ${row.muted ? 'text-[#888]' : ''}`}>{row.name}</td>
    <td className={`border-r border-b border-dotted border-[#666] p-0 align-top ${row.muted ? 'text-[#888]' : ''}`}>
      {row.check ? (
        <div className="pt-[3px] pl-[3px]">
          <Checkbox label={row.name} defaultChecked={row.check === 'on'} disabled />
        </div>
      ) : (
        <input
          aria-label={row.name}
          defaultValue={row.value}
          readOnly={row.muted}
          className={`block h-[17px] w-full bg-transparent ${row.active ? 'border border-black pb-px pl-px' : 'pb-[2px] pl-[2px]'}`}
        />
      )}
    </td>
    <td className="overflow-hidden border-r border-b border-dotted border-[#666] p-0 align-top whitespace-nowrap">{row.formula}</td>
    <td className="border-b border-dotted border-[#666] p-0 pt-[3px] pl-[3px] align-top">
      {row.lock && <Checkbox label={`Lock ${row.name}`} />}
    </td>
  </tr>
);

const DialogButton: React.FC<{ children: React.ReactNode; primary?: boolean }> = ({ children, primary }) => (
  <button className={`h-[22px] w-[76px] rounded-[4px] border bg-[#fdfdfd] ${primary ? 'border-[#0f6a9c]' : 'border-[#d0d0d0]'}`}>
    {children}
  </button>
);

const FamilyTypesDialog: React.FC = () => (
  <div
    role="dialog"
    aria-label="Family Types"
    className="absolute top-[27px] right-[296px] w-[620px] overflow-hidden rounded-[8px] border border-[#a8a8a8] bg-[#f0f0f0] shadow-[0_16px_40px_8px_rgba(0,0,0,0.3)]"
  >
    <div className="flex h-[30px] items-center justify-between bg-linear-to-r from-[#f4f0f0] via-[#eef3ea] to-[#e6f8e4] pr-[9px] pl-2">
      <h2>Family Types</h2>
      <button aria-label="Close">
        <svg width="12" height="12" viewBox="0 0 12 12" stroke="#222"><path d="M1 1l10 10M11 1L1 11" /></svg>
      </button>
    </div>
    <div className="px-3">
      <div className="mt-3 flex h-[22px] items-center">
        <label htmlFor="type-name" className="w-[69px] shrink-0 text-[11px]">Type name:</label>
        <div className="relative w-[433px]">
          <select id="type-name" className="h-[21px] w-full appearance-none border border-[#ccc] bg-white pl-[2px]">
            <option>Bbot CP 30</option>
          </select>
          <Chevron className="pointer-events-none absolute top-[6px] right-[3px]" />
        </div>
        <button aria-label="New Type" className="ml-[9px] w-[18px]"><NewIcon mark="new" /></button>
        <button aria-label="Rename Type" className="ml-3 w-[18px]">
          <svg width="18" height="18" viewBox="0 0 18 18">
            <path d="M1 3h16v12H1z" fill="#f4f8fb" stroke="#333" />
            <path d="M2 4h9v10H2z" fill="#8cc6ee" />
            <text x="3" y="13" fontSize="10" fontWeight="700" fill="#1c3f66">A</text>
            <path d="M12 5h3M12 13h3M13.500 5v8" stroke="#333" />
          </svg>
        </button>
        <button aria-label="Delete Type" className="ml-3 w-[18px]"><NewIcon mark="delete" /></button>
      </div>
      <div className="mt-[11px] flex h-5 items-center border-b border-[#777] bg-white">
        <input aria-label="Search parameters" placeholder="Search parameters" className="h-full flex-1 pl-[2px] text-[11px] placeholder:text-[#777]" />
        <svg width="18" height="18" viewBox="0 0 18 18" fill="none" stroke="#444">
          <circle cx="7" cy="7" r="5.500" fill="#e5f0ef" />
          <path d="M11 11l5 5" strokeWidth="3" />
        </svg>
      </div>
      <div className="mt-[9px] flex h-[518px] flex-col border-t-2 border-r border-b border-l border-t-[#666] border-r-[#f9f9f9] border-b-[#fff] border-l-[#666]">
        <div className="flex h-[499px]">
          <div className="w-[576px] overflow-hidden bg-white">
            <table className="w-[576px] table-fixed border-separate border-spacing-0">
              <colgroup>
                <col className="w-[181px]" />
                <col className="w-[183px]" />
                <col className="w-[190px]" />
                <col className="w-[22px]" />
              </colgroup>
              <thead>
                <tr className="h-[22px] bg-[#f0f0f0]">
                  <th className="border-r border-b border-black p-0 font-normal">Parameter</th>
                  <th className="border-r border-b border-black p-0 font-normal">Value</th>
                  <th className="border-r border-b border-black p-0 font-normal">Formula</th>
                  <th className="overflow-hidden border-b border-black p-0 pl-[7px] text-left font-normal whitespace-nowrap">Lock</th>
                </tr>
              </thead>
              {paramGroups.map(group => (
                <tbody key={group.title}>
                  <tr className="h-[22px]">
                    <th colSpan={4} className="border-t-[3px] border-white bg-[#98b4d0] p-0 pl-[2px] text-left font-bold">
                      {group.title}
                    </th>
                  </tr>
                  {group.rows.map(row => (
                    <ParamRow key={row.name} row={row} />
                  ))}
                </tbody>
              ))}
            </table>
          </div>
          <div className="flex-1 pt-[17px] pl-2">
            <div className="h-[436px] w-[2px] bg-[#858585]" />
          </div>
        </div>
        <div className="mt-[7px] ml-[17px] h-[2px] w-[434px] bg-[#858585]" />
      </div>
      <div className="mt-[11px] flex h-[22px] items-center justify-between">
        <div className="flex gap-3 pl-[2px]">
          <button aria-label="Edit Parameter">
            <svg width="18" height="18" viewBox="0 0 18 18" stroke="#444">
              <path d="M13 1l3 3L6 15l-4 1 1-4z" fill="#e8d9b8" />
              <path d="M2 16l3-4" />
            </svg>
          </button>
          <button aria-label="New Parameter"><NewIcon mark="new" /></button>
          <button aria-label="Browse Parameters">
            <svg width="18" height="18" viewBox="0 0 18 18" stroke="#444" fill="none">
              <path d="M2 1h8l3 3v11H2z" fill="#f3f3f3" />
              <path d="M4 5h6M4 8h6M4 11h4" />
              <path d="M8 16c-2-3 1-5 2-4 1-3 5-2 5 1 3 0 2 3 0 3z" fill="#cfe0f5" stroke="#2f5f9e" />
            </svg>
          </button>
          <button aria-label="Delete Parameter" disabled><NewIcon mark="delete" dim /></button>
          <button aria-label="Duplicate">
            <svg width="18" height="18" viewBox="0 0 18 18" stroke="#444">
              <path d="M2 2h9v12H2z" fill="#ddd" />
              <path d="M6 5h7l3 3v9H6z" fill="#f8f8f8" />
            </svg>
          </button>
          <button aria-label="Move up"><MoveIcon up /></button>
          <button aria-label="Move down"><MoveIcon /></button>
          <button aria-label="Sort ascending" className="ml-3"><SortIcon /></button>
          <button aria-label="Sort descending"><SortIcon up /></button>
        </div>
        <button className="h-[22px] w-[124px] rounded-[4px] border border-[#d0d0d0] bg-[#fdfdfd] text-[11px] whitespace-nowrap">Manage Lookup Tables</button>
      </div>
      <div className="mt-[14px] mb-4 flex h-[22px] items-start justify-between">
        <a href="#family-types-help" className="text-[11px] leading-3 text-[#1a5fb4] underline">How do I manage family types?</a>
        <div className="flex gap-2">
          <DialogButton primary>OK</DialogButton>
          <DialogButton>Cancel</DialogButton>
          <DialogButton>Apply</DialogButton>
        </div>
      </div>
    </div>
    <svg width="9" height="9" viewBox="0 0 9 9" className="absolute right-0 bottom-0" fill="#bbb">
      <path d="M6 0h2v2H6zM3 3h2v2H3zM6 3h2v2H6zM0 6h2v2H0zM3 6h2v2H3zM6 6h2v2H6z" />
    </svg>
  </div>
);

const App: React.FC = () => {
  return (
    <div className="flex h-screen flex-col overflow-hidden bg-[#ccc] font-['Open_Sans','Noto_Sans',sans-serif] text-[12px] leading-4 text-[#1a1a1a]">
      <TitleBar />
      <MenuBar />
      <Ribbon />
      <div className="h-[26px] shrink-0 bg-[#eee]" />

      <main className="flex min-h-0 flex-1 border-t-2 border-[#c8c8c8]">
        <aside className="flex w-[219px] shrink-0 flex-col overflow-hidden bg-[#eee] pr-[2px]">
          <PropertiesPanel />
          <ProjectBrowser />
        </aside>
        <div className="w-[2px] shrink-0 bg-[#c8c8c8]" />

        <section className="flex min-w-0 flex-1 flex-col border-b border-l-2 border-white">
          <div className="flex h-[22px] items-center justify-between border-b-2 border-white">
            <div className="flex h-full w-[126px] items-center bg-white pr-[5px] pl-[3px]">
              <svg width="16" height="16" viewBox="0 0 16 16" stroke="#3d4756">
                <path d="M1 6l5-4 7 1 2 4v5l-6 3-7-3z" fill="#d5dbe2" />
                <path d="M1 6l7 2 7-1M8 8v7M4 9v4h2V9" fill="none" />
              </svg>
              <span className="flex-1 pl-2 text-[#c4c4c4]">{'{3D}'}</span>
              <button aria-label="Close view">
                <svg width="10" height="10" viewBox="0 0 10 10"><path d="M1 1l8 8M9 1L1 9" stroke="#222" strokeWidth="1.500" /></svg>
              </button>
            </div>
            <svg width="8" height="8" viewBox="0 0 8 8" className="mr-1" stroke="#222">
              <path d="M0 1h8" />
              <path d="M1 4h6L4 7z" fill="#222" />
            </svg>
          </div>

          <div className="flex min-h-0 flex-1">
            <div className="relative flex-1 bg-linear-to-b from-[#f2f2f2] to-[#a3a3a3] pt-[25px] pl-[137px]">
              <CabinetModel />
              <ViewCube />
              <NavigationBar />
              <FamilyTypesDialog />
            </div>
            <div className="flex w-[17px] items-center justify-center border-l border-white bg-[#efefef]">
              <div className="h-[17px] w-[2px] bg-[#777]" />
            </div>
          </div>

          <div className="flex h-[18px] shrink-0 items-center bg-[#efefef]">
            <span className="w-[79px] pl-6 text-[11px] leading-[18px]">1 : 100</span>
            <div className="flex gap-[5px]">
              {viewTools.map(tool => (
                <button key={tool.name} aria-label={tool.name}>
                  <svg width="16" height="16" viewBox="0 0 16 16" stroke="#444">{tool.drawing}</svg>
                </button>
              ))}
            </div>
            <div className="flex flex-1 justify-center">
              <div className="h-[2px] w-4 bg-[#888]" />
            </div>
            <svg width="9" height="9" viewBox="0 0 9 9" className="mt-1 mr-[3px]" fill="#bbb">
              <path d="M6 0h2v2H6zM3 3h2v2H3zM6 3h2v2H6zM0 6h2v2H0zM3 6h2v2H3zM6 6h2v2H6z" />
            </svg>
          </div>
        </section>
      </main>

      <footer className="flex h-6 shrink-0 items-center justify-between bg-[#ccc]">
        <span className="pl-px">Ready</span>
        <div className="flex items-center gap-[10px] pr-[74px]">
          {statusTools.map(tool => (
            <button key={tool.name} aria-label={tool.name}>
              <svg width="16" height="16" viewBox="0 0 16 16" fill="#999">{tool.drawing}</svg>
            </button>
          ))}
          <button className="flex items-center text-[11px]">
            <svg width="16" height="16" viewBox="0 0 16 16" stroke="#444">
              <path d="M1 1h14v2l-5 6v5l-4 1V9L1 3z" fill="#dfe5ec" />
            </svg>
            :0
          </button>
        </div>
      </footer>
      <div className="flex h-2 shrink-0 items-end bg-[#1e241d]">
        <span className="ml-8 h-[2px] w-3 rounded-t-full bg-[#d68a84]" />
        <span className="ml-[1073px] h-[2px] w-[18px] rounded-t-sm bg-[#4aa3c4]" />
        <span className="ml-[51px] h-1 w-[38px] rounded-t-sm bg-[#3a3f3a]" />
      </div>
    </div>
  );
};

export default App;
